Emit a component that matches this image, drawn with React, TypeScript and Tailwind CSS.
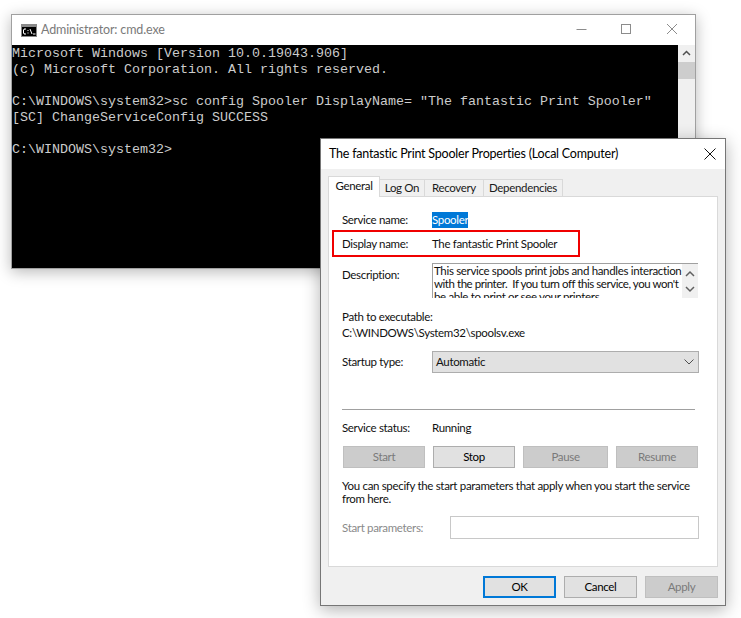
import type { ReactNode } from "react";

function CmdIcon() {
  return (
    <svg width="16" height="13" viewBox="0 0 16 13" className="shrink-0">
      <rect x="0" y="0" width="16" height="13" fill="#8a8a8a" />
      <rect x="1" y="3" width="14" height="9" fill="#000" />
      <path d="M5 5H3v1H2.500v3H3v1h2M7 6v1M7 8.500v1M9 5l2 5M12 10h2.500" stroke="#fff" strokeWidth="1" fill="none" />
    </svg>
  );
}

function Tab({ label, active, width }: { label: string; active?: boolean; width: string }) {
  if (active) {
    return (
      <div className={`relative z-10 -mb-px flex h-[21px] items-center justify-center border border-b-0 border-[#d9d9d9] bg-white pb-[2px] ${width}`}>
        {label}
      </div>
    );
  }
  return (
    <div className={`mt-[3px] flex h-[17px] items-center justify-center border border-l-0 border-b-0 border-[#d9d9d9] bg-[#f0f0f0] text-[#1a1a1a] ${width}`}>
      {label}
    </div>
  );
}

function Btn({ children, width, disabled, focus }: { children: ReactNode; width: string; disabled?: boolean; focus?: boolean }) {
  const look = focus
    ? "border-2 border-[#0078d7] bg-[#e1e1e1] text-black"
    : disabled
      ? "border border-[#bfbfbf] bg-[#cccccc] text-[#7a7a7a]"
      : "border border-[#adadad] bg-[#e1e1e1] text-black";
  return <div className={`flex h-[22px] shrink-0 items-center justify-center ${width} ${look}`}>{children}</div>;
}

export default function App() {
  return (
    <div className="relative h-[618px] w-[741px] overflow-hidden bg-white">
      {/* console window */}
      <div className="absolute left-[11px] top-[14px] flex h-[255px] w-[685px] flex-col border border-[#a0a0a0] bg-white shadow-[0_3px_14px_rgba(0,0,0,0.28)]">
        <div className="flex h-[30px] shrink-0 items-center pl-[9px] font-['Lato',sans-serif] text-[12.5px] tracking-[-0.14px] text-[#7a7a7a]">
          <CmdIcon />
          <span className="ml-[4px]">Administrator: cmd.exe</span>
          <svg width="112" height="14" viewBox="0 0 112 14" className="ml-auto mr-[7px] mt-[-2px]" fill="none" stroke="#8c8c8c">
            <path d="M0.500 7.500H10.500" />
            <rect x="45.500" y="2.500" width="9" height="9" />
            <path d="M91 2l10 10M101 2L91 12" />
          </svg>
        </div>
        <div className="flex min-h-0 flex-1">
          <pre className="flex-1 bg-black pt-px font-['Liberation_Mono',monospace] text-[13.33px] leading-[16px] text-[#cccccc]">
            {`Microsoft Windows [Version 10.0.19043.906]
(c) Microsoft Corporation. All rights reserved.

C:\\WINDOWS\\system32>sc config Spooler DisplayName= "The fantastic Print Spooler"
[SC] ChangeServiceConfig SUCCESS

C:\\WINDOWS\\system32>`}
          </pre>
          <div className="flex w-[17px] shrink-0 flex-col items-center bg-[#f0f0f0]">
            <svg width="17" height="17" viewBox="0 0 17 17" fill="none" stroke="#505050" strokeWidth="1.500">
              <path d="M5 10l3.500-3.500L12 10" />
            </svg>
            <div className="h-[17px] w-full bg-[#cdcdcd]" />
          </div>
        </div>
      </div>

      {/* properties dialog */}
      <div className="absolute left-[320px] top-[138px] flex h-[468px] w-[406px] flex-col border border-[#767676] bg-[#f0f0f0] font-['Lato',sans-serif] text-[11.5px] leading-[16px] tracking-[-0.33px] text-[#111] shadow-[0_4px_16px_rgba(0,0,0,0.3)]">
        <div className="flex h-[30px] shrink-0 items-center justify-between bg-white pl-[8px] pr-[9px] text-[12.5px] tracking-[-0.22px] text-black">
          <span>The fantastic Print Spooler Properties (Local Computer)</span>
          <svg width="12" height="12" viewBox="0 0 12 12" fill="none" stroke="#111" strokeWidth="1">
            <path d="M0.500 0.500l11 11M11.500 0.500l-11 11" />
          </svg>
        </div>

        <div className="mx-[7px] mt-[7px] flex h-[20px] shrink-0 items-start">
          <Tab label="General" active width="w-[52px]" />
          <Tab label="Log On" width="w-[45px]" />
          <Tab label="Recovery" width="w-[59px]" />
          <Tab label="Dependencies" width="w-[79px]" />
        </div>

        <div className="relative mx-[7px] flex h-[371px] shrink-0 flex-col border border-[#d9d9d9] bg-white pl-[13px] pt-[15px]">
          <div className="flex h-[16px] items-center">
            <span className="w-[90px]">Service name:</span>
            <span className="bg-[#0078d7] text-white">Spooler</span>
          </div>
          <div className="mt-[8px] flex h-[16px] items-center">
            <span className="w-[90px]">Display name:</span>
            <span>The fantastic Print Spooler</span>
          </div>
          {/* red highlight drawn over the row */}
          <div className="absolute left-[3px] top-[33px] h-[27px] w-[248px] border-2 border-[#f00000]" />

          <div className="mt-[11px] flex h-[35px] items-start">
            <span className="mt-[4px] w-[90px]">Description:</span>
            <div className="flex h-[35px] w-[266px] overflow-hidden border-l border-t border-[#a0a0a0]">
              <p className="h-[34px] flex-1 overflow-hidden whitespace-nowrap pl-px leading-[13px]">
                This service spools print jobs and handles interaction
                <br />
                <span className="tracking-[-0.46px]">with the printer. &nbsp;If you turn off this service, you won't</span>
                <br />
                be able to print or see your printers.
              </p>
              <div className="flex w-[16px] shrink-0 flex-col items-center bg-[#f0f0f0]">
                <svg width="16" height="34" viewBox="0 0 16 34" fill="none" stroke="#606060" strokeWidth="1.500">
                  <path d="M4 12l4-4 4 4M4 23l4 4 4-4" />
                </svg>
              </div>
            </div>
          </div>

          <div className="mt-[11px] h-[16px]">Path to executable:</div>
          <div className="h-[16px]">C:\WINDOWS\System32\spoolsv.exe</div>

          <div className="mt-[10px] flex h-[22px] items-center">
            <span className="w-[90px]">Startup type:</span>
            <div className="flex h-[22px] w-[267px] items-center justify-between border border-[#adadad] bg-[#e1e1e1] pl-[3px] pr-[4px]">
              <span>Automatic</span>
              <svg width="10" height="6" viewBox="0 0 10 6" fill="none" stroke="#505050">
                <path d="M0.500 0.500L5 5l4.500-4.500" />
              </svg>
            </div>
          </div>

          <div className="mt-[36px] h-px w-[353px] bg-[#a0a0a0]" />

          <div className="mt-[10px] flex h-[16px] items-center">
            <span className="w-[90px]">Service status:</span>
            <span>Running</span>
          </div>

          <div className="mt-[10px] flex h-[22px] gap-[8px] pl-px">
            <Btn width="w-[82px]" disabled>Start</Btn>
            <Btn width="w-[82px]">Stop</Btn>
            <Btn width="w-[85px]" disabled>Pause</Btn>
            <Btn width="w-[82px]" disabled>Resume</Btn>
          </div>

          <p className="mt-[11px] w-[356px] leading-[13px]">
            You can specify the start parameters that apply when you start the service from here.
          </p>

          <div className="mt-[11px] flex h-[23px] items-center">
            <span className="w-[108px] text-[#8a8a8a]">Start parameters:</span>
            <div className="h-[23px] w-[249px] border border-[#c8c8c8] bg-white" />
          </div>
        </div>

        <div className="mr-[7px] mt-[9px] flex justify-end gap-[8px]">
          <Btn width="w-[73px]" focus>OK</Btn>
          <Btn width="w-[73px]">Cancel</Btn>
          <Btn width="w-[73px]" disabled>Apply</Btn>
        </div>
      </div>
    </div>
  );
}
